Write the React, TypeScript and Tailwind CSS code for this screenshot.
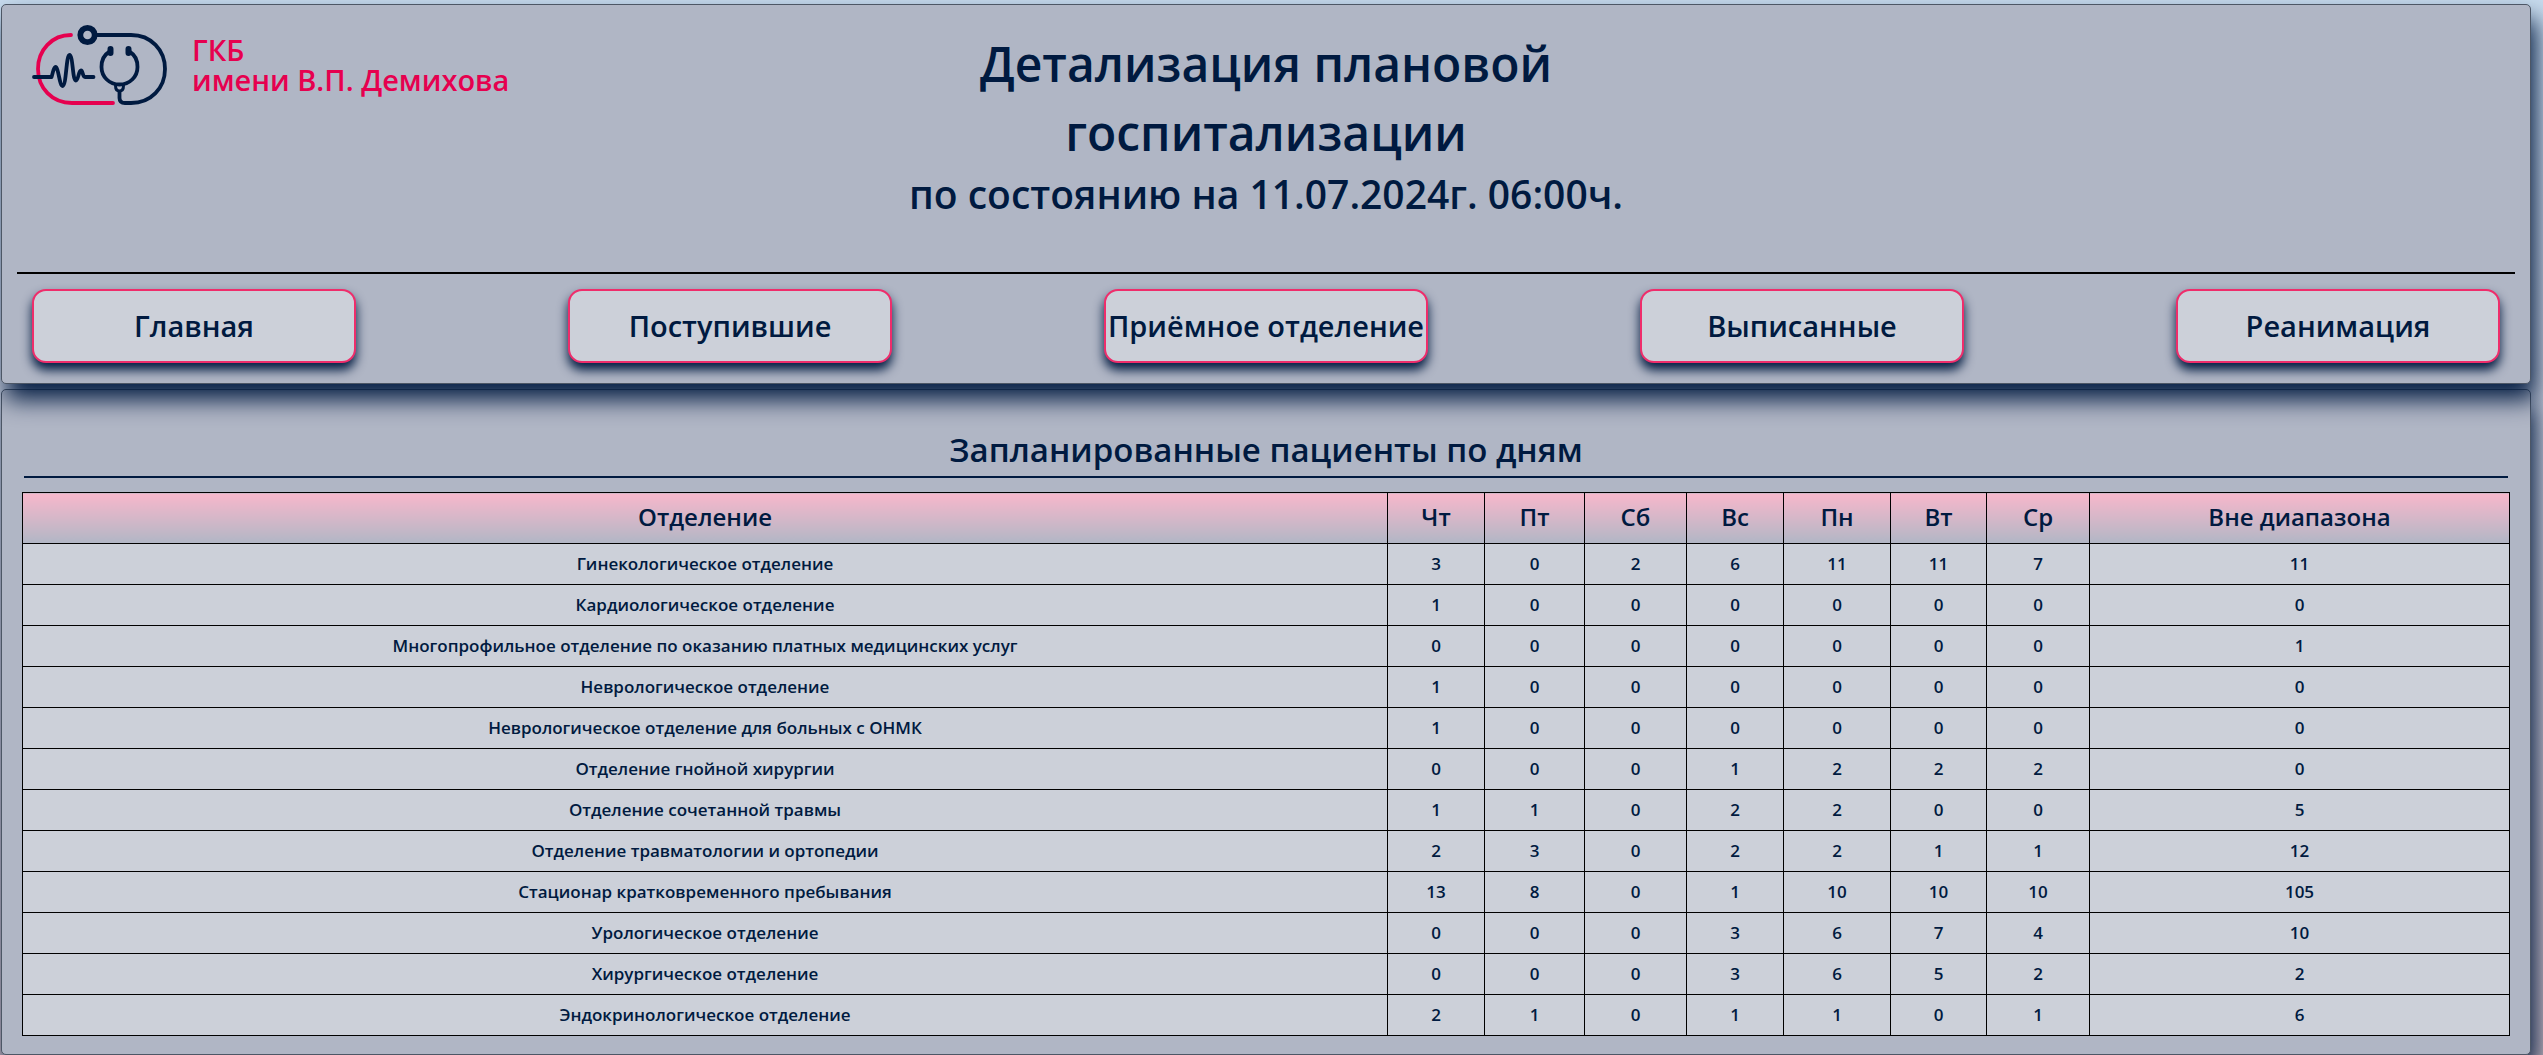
const navItems = ["Главная", "Поступившие", "Приёмное отделение", "Выписанные", "Реанимация"];

const days = ["Чт", "Пт", "Сб", "Вс", "Пн", "Вт", "Ср"];

const rows: [string, number[]][] = [
  ["Гинекологическое отделение", [3, 0, 2, 6, 11, 11, 7, 11]],
  ["Кардиологическое отделение", [1, 0, 0, 0, 0, 0, 0, 0]],
  ["Многопрофильное отделение по оказанию платных медицинских услуг", [0, 0, 0, 0, 0, 0, 0, 1]],
  ["Неврологическое отделение", [1, 0, 0, 0, 0, 0, 0, 0]],
  ["Неврологическое отделение для больных с ОНМК", [1, 0, 0, 0, 0, 0, 0, 0]],
  ["Отделение гнойной хирургии", [0, 0, 0, 1, 2, 2, 2, 0]],
  ["Отделение сочетанной травмы", [1, 1, 0, 2, 2, 0, 0, 5]],
  ["Отделение травматологии и ортопедии", [2, 3, 0, 2, 2, 1, 1, 12]],
  ["Стационар кратковременного пребывания", [13, 8, 0, 1, 10, 10, 10, 105]],
  ["Урологическое отделение", [0, 0, 0, 3, 6, 7, 4, 10]],
  ["Хирургическое отделение", [0, 0, 0, 3, 6, 5, 2, 2]],
  ["Эндокринологическое отделение", [2, 1, 0, 1, 1, 0, 1, 6]],
];

function Logo() {
  return (
    <svg width="136" height="84" viewBox="32 23 136 84" fill="none" strokeWidth="3.8" strokeLinecap="round" strokeLinejoin="round" aria-hidden="true">
      <path d="M71 35C52 35 38 50 38 69C38 88 52 103 72 103H113" stroke="#e6004f" />
      <path d="M96 35H131C151 35 165 50 165 69C165 88 151 103 131 103H125C121.500 103 119.500 101 119.500 98V92" stroke="#001a40" />
      <circle cx="87.500" cy="35" r="7.200" stroke="#001a40" strokeWidth="5.800" />
      <path d="M34 77H51.500C53 73 53.500 67 55.500 67C58.500 67 59.500 86 62.500 86C66.500 86 66 55 69.500 55C73 55 72.500 80.500 75.800 80.500C78.500 80.500 78.500 70.500 81 70.500C83 70.500 82.500 77 85 77H93.500" stroke="#001a40" />
      <path d="M109 52C104 55 101.500 61 101.500 67C101.500 77 109.500 84.500 119.500 84.500C129.500 84.500 137.500 77 137.500 67C137.500 61 135 55 130 52" stroke="#001a40" />
      <path d="M110.500 49V53M128.500 49V53" stroke="#001a40" strokeWidth="6" />
      <path d="M115.500 85.500C115.500 89 116.500 91 119.500 91C122.500 91 123.500 89 123.500 85.500" stroke="#001a40" strokeWidth="3" />
    </svg>
  );
}

export default function App() {
  return (
    <div className="flex min-h-screen flex-col gap-[5px] bg-linear-to-b from-[#c8dcee] to-[#c8b9c0] pt-1 pr-3 pl-px font-['Open_Sans',sans-serif] font-semibold text-[#001a40]">
      <header className="relative z-10 rounded-[5px] border border-[#4d5766] bg-[#b0b6c5] px-[15px] pb-5 shadow-[5px_15px_25px_#001a40]">
        <div className="grid h-[269px] grid-cols-3 border-b-2 border-black">
          <a href="#home" className="flex items-start gap-6 pt-[18px] pl-[15px] text-[#e6004f]">
            <Logo />
            <span className="flex flex-col pt-3 text-[29px] leading-[30px]">
              <span>ГКБ</span>
              <span>имени В.П. Демихова</span>
            </span>
          </a>
          <div className="pt-6 text-center">
            <h1 className="text-5xl leading-[69px]">Детализация плановой госпитализации</h1>
            <p className="text-[39px] leading-[54px] whitespace-nowrap">по состоянию на 11.07.2024г. 06:00ч.</p>
          </div>
        </div>
        <nav className="flex justify-between px-[15px] pt-[15px]">
          {navItems.map((item) => (
            <button
              key={item}
              type="button"
              className="h-[74px] w-[324px] rounded-[14px] border-2 border-[#ef2d6b] bg-[#ccd0d9] text-[29px] whitespace-nowrap shadow-[0_7px_11px_#001a40]"
            >
              {item}
            </button>
          ))}
        </nav>
      </header>

      <main className="rounded-[5px] border border-[#4d5766] bg-[#b0b6c5] px-5 pt-[35px] pb-[18px] shadow-[5px_15px_25px_#001a40]">
        <h2 className="mx-0.5 border-b-2 border-[#001a40] pb-0.5 text-center text-[33px] leading-[49px]">Запланированные пациенты по дням</h2>
        <table className="mt-3.5 w-full table-fixed border-collapse text-center">
          <colgroup>
            <col />
            <col className="w-[97px]" />
            <col className="w-[100px]" />
            <col className="w-[102px]" />
            <col className="w-[97px]" />
            <col className="w-[107px]" />
            <col className="w-[96px]" />
            <col className="w-[103px]" />
            <col className="w-[420px]" />
          </colgroup>
          <thead>
            <tr className="h-[51px] text-2xl">
              {["Отделение", ...days, "Вне диапазона"].map((name) => (
                <th key={name} scope="col" className="border border-black bg-linear-to-b from-[#f7b7cb] to-[#b0b6c5] p-0 pb-0.5 font-semibold">
                  {name}
                </th>
              ))}
            </tr>
          </thead>
          <tbody>
            {rows.map(([department, counts]) => (
              <tr key={department} className="h-[41px] bg-[#ccd0d9] text-[17px]">
                <th scope="row" className="border border-black p-0 font-semibold">
                  {department}
                </th>
                {counts.map((count, i) => (
                  <td key={i} className="border border-black p-0">
                    {count}
                  </td>
                ))}
              </tr>
            ))}
          </tbody>
        </table>
      </main>
    </div>
  );
}
